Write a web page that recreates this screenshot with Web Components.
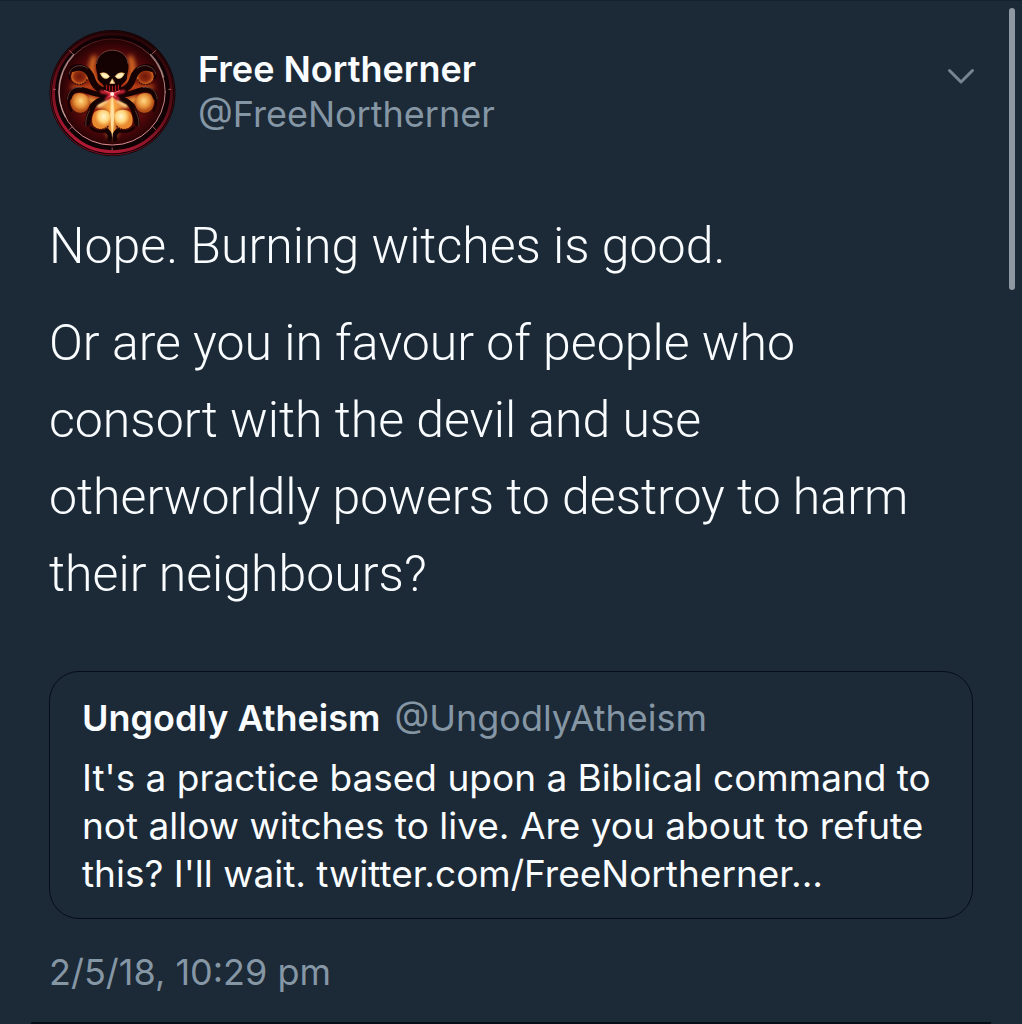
<!DOCTYPE html>
<html lang="en">
<head>
<meta charset="utf-8">
<meta name="viewport" content="width=device-width, initial-scale=1">
<title>Free Northerner</title>
<style>
  body {
    margin: 0;
    min-height: 100vh;
    background: #1c2936;
    color: #fafdff;
    font-family: Inter, "Liberation Sans", sans-serif;
    --muted: #8596a5;
    --line: #040d18;
  }
</style>
</head>
<body>
<tweet-detail>
  <tweet-author slot="author" name="Free Northerner" handle="@FreeNortherner">
    <hydra-avatar slot="avatar"></hydra-avatar>
  </tweet-author>
  <tweet-text>
    <p>Nope. Burning witches is good.</p>
    <p>Or are you in favour of people who<br>consort with the devil and use<br>otherworldly powers to destroy to harm<br>their neighbours?</p>
  </tweet-text>
  <quoted-tweet name="Ungodly Atheism" handle="@UngodlyAtheism">It's a practice based upon a Biblical command to<br>not allow witches to live. Are you about to refute<br>this? I'll wait. twitter.com/FreeNortherner...</quoted-tweet>
  <time slot="date" datetime="2018-02-05T22:29">2/5/18, 10:29 pm</time>
</tweet-detail>
<scroll-thumb></scroll-thumb>

<script>
/**
 * Page shell: stacks the author row, the body and the date above a divider.
 */
class TweetDetail extends HTMLElement {
  constructor () {
    super()
    this.attachShadow({ mode: 'open' })
  }

  connectedCallback () {
    this.shadowRoot.innerHTML = `
      <style>
        :host {
          display: block;
          padding: 29px 31px 0;
          border-top: 1px solid #15222e;
        }
        article {
          padding: 0 18px 26px;
        }
        .date {
          margin-top: 29px;
          font-size: 36px;
          line-height: 48px;
          color: var(--muted);
        }
        hr {
          margin: 0;
          border: 0;
          height: 2px;
          background: var(--line);
        }
      </style>
      <article>
        <slot name="author"></slot>
        <slot></slot>
        <div class="date"><slot name="date"></slot></div>
      </article>
      <hr>
    `
  }
}

/**
 * Avatar, display name and handle, with the menu button at the end.
 */
class TweetAuthor extends HTMLElement {
  constructor () {
    super()
    this.attachShadow({ mode: 'open' })
  }

  connectedCallback () {
    this.shadowRoot.innerHTML = `
      <style>
        :host {
          display: flex;
          align-items: center;
          gap: 22px;
        }
        .names {
          flex: 1;
          min-width: 0;
          padding-bottom: 2px;
          font-size: 36px;
          line-height: 45px;
        }
        .name {
          font-weight: 600;
        }
        .handle {
          color: var(--muted);
        }
        button {
          align-self: flex-start;
          display: flex;
          margin: 0;
          padding: 36px 0 16px 16px;
          border: 0;
          background: none;
          color: #758592;
          cursor: pointer;
        }
        svg {
          overflow: visible;
        }
      </style>
      <slot name="avatar"></slot>
      <div class="names">
        <div class="name"></div>
        <div class="handle"></div>
      </div>
      <button type="button" aria-label="More options">
        <svg width="24" height="20" viewBox="0 0 24 20" fill="none" stroke="currentColor" stroke-width="3" stroke-linecap="round" stroke-linejoin="round">
          <path d="M0.5 4.5 12 16 23.5 4.5"/>
        </svg>
      </button>
    `
    this.shadowRoot.querySelector('.name').textContent = this.getAttribute('name')
    this.shadowRoot.querySelector('.handle').textContent = this.getAttribute('handle')
  }
}

/**
 * Round emblem: a skull over six curled tentacles, lit from behind.
 */
class HydraAvatar extends HTMLElement {
  constructor () {
    super()
    this.attachShadow({ mode: 'open' })
  }

  connectedCallback () {
    this.shadowRoot.innerHTML = `
      <style>
        :host {
          display: block;
          flex: none;
          width: 127px;
          height: 126px;
        }
        svg {
          display: block;
          width: 100%;
          height: 100%;
        }
      </style>
      <svg viewBox="18 18 380 380" fill="none" stroke-linecap="round" role="img" aria-label="Avatar">
        <defs>
          <radialGradient id="disc" gradientUnits="userSpaceOnUse" cx="207" cy="208" r="160">
            <stop offset="0" stop-color="#d8451a"/>
            <stop offset=".45" stop-color="#86180b"/>
            <stop offset=".8" stop-color="#480609"/>
            <stop offset="1" stop-color="#250305"/>
          </radialGradient>
          <linearGradient id="rim" x1=".7" y1="0" x2=".35" y2="1">
            <stop offset="0" stop-color="#250507"/>
            <stop offset=".5" stop-color="#5d0d17"/>
            <stop offset="1" stop-color="#b51a36"/>
          </linearGradient>
          <linearGradient id="ring" x1="0" y1="0" x2="0" y2="1">
            <stop offset="0" stop-color="#4a1310"/>
            <stop offset=".3" stop-color="#a87573"/>
            <stop offset=".7" stop-color="#c98a8c"/>
            <stop offset="1" stop-color="#e08b8f"/>
          </linearGradient>
          <radialGradient id="lobe" cx=".55" cy=".4">
            <stop offset="0" stop-color="#ffd985"/>
            <stop offset=".6" stop-color="#e8953c"/>
            <stop offset="1" stop-color="#b65218"/>
          </radialGradient>
          <radialGradient id="ember">
            <stop offset="0" stop-color="#6d1809"/>
            <stop offset=".6" stop-color="#8f2a0e"/>
            <stop offset="1" stop-color="#d96f26"/>
          </radialGradient>
          <radialGradient id="hot" cx=".65" cy=".35">
            <stop offset="0" stop-color="#fff6cf"/>
            <stop offset=".55" stop-color="#ffd67c"/>
            <stop offset="1" stop-color="#e8892f"/>
          </radialGradient>
          <filter id="glow" x="-50%" y="-50%" width="200%" height="200%">
            <feGaussianBlur stdDeviation="8"/>
          </filter>
          <filter id="soft" x="-50%" y="-50%" width="200%" height="200%">
            <feGaussianBlur stdDeviation="3"/>
          </filter>
          <g id="side">
            <ellipse cx="109" cy="158" rx="26" ry="24" fill="url(#ember)"/>
            <path d="M86 214C100 204 124 206 134 220C142 236 140 252 127 262C114 272 94 268 87 255C80 243 78 226 86 214Z" fill="url(#lobe)"/>
            <path d="M152 268C160 256 190 254 199 268C203 284 200 300 190 311C180 320 162 318 152 308C144 298 145 280 152 268Z" fill="url(#hot)"/>
            <g stroke="#160203">
              <path d="M200 203C168 203 153 188 145 163C137 138 114 124 90 134" stroke-width="20"/>
              <path d="M94 129C80 134 73 148 79 164" stroke-width="6"/>
              <path d="M200 209C172 216 155 211 128 201C103 193 84 199 77 222" stroke-width="16"/>
              <path d="M77 216C73 232 76 250 84 262" stroke-width="6"/>
              <path d="M198 215C182 228 160 230 149 247C138 264 136 282 132 300" stroke-width="18"/>
              <path d="M190 322C199 328 203 336 199 348" stroke-width="14"/>
              <path d="M142 312C156 326 178 328 193 319" stroke-width="8"/>
            </g>
            <g stroke="#43100a" stroke-width="5" stroke-dasharray="1 7">
              <path d="M88 176C105 188 126 183 132 165"/>
              <path d="M88 262C105 278 130 270 140 252"/>
              <path d="M149 310C162 323 186 321 198 304"/>
            </g>
            <g stroke="#a87869" stroke-width="2" opacity=".7">
              <path d="M77 151C79 127 114 117 132 133"/>
              <path d="M72 226C74 200 92 188 115 191"/>
              <path d="M138 262C129 278 126 294 128 307"/>
            </g>
          </g>
        </defs>

        <circle cx="208" cy="208" r="190" fill="#100204"/>
        <circle cx="208" cy="207" r="178" stroke="url(#rim)" stroke-width="9"/>
        <circle cx="208" cy="208" r="187" stroke="url(#rim)" stroke-width="2"/>
        <circle cx="207" cy="205" r="160" fill="url(#disc)" stroke="url(#ring)" stroke-width="3"/>

        <g filter="url(#glow)">
          <path d="M158 176Q136 140 152 102M256 176Q278 140 262 102" stroke="#f8852a" stroke-width="14"/>
          <path d="M88 190H150M265 190H327" stroke="#d85a1c" stroke-width="12"/>
          <path d="M207 205V330" stroke="#ffa63c" stroke-width="28"/>
          <path d="M136 226 190 250M278 226 224 250" stroke="#ffb74a" stroke-width="16"/>
        </g>

        <use href="#side"/>
        <use href="#side" transform="matrix(-1 0 0 1 415 0)"/>

        <path d="M207 216 201 275 207 346 214 275Z" fill="#ffdf9f"/>
        <path d="M207 213V270M194 232 166 248M221 232 249 248" stroke="#ffe1a0" stroke-width="7" filter="url(#soft)"/>

        <path d="M207 78C177 78 158 98 158 126C158 141 164 151 163 163C164 174 177 178 181 186L184 202Q207 214 231 202L234 186C240 177 251 173 252 162C251 150 257 141 256 125C255 98 237 78 207 78Z" fill="#140102"/>
        <path d="M160 119C163 66 251 64 255 119" stroke="#714039" stroke-width="3"/>
        <g fill="#fff0bd" stroke="#ffbe62" stroke-width="2">
          <path d="M172 149C182 144 193 149 199 158C192 168 176 166 172 149Z"/>
          <path d="M243 149C233 144 222 149 216 158C223 168 239 166 243 149Z"/>
          <path d="M207 166 200 179H214Z"/>
        </g>
        <path d="M190 184V196M199 187V200M208 188V201M217 187V200M226 184V196" stroke="#a61a1b" stroke-width="4"/>
        <path d="M174 204 207 211 242 203M190 226 207 211 225 226" stroke="#ff2b43" stroke-width="8" filter="url(#soft)"/>
        <path d="M184 201 207 210 230 201M198 219 207 210 217 219" stroke="#ff6972" stroke-width="3"/>
        <circle cx="207" cy="211" r="6" fill="#fff0df"/>
        <path d="M78 80 88 90M328 90 338 80M78 318 88 308M328 308 338 318M30 197H36M378 197H384M207 374V380" stroke="#a25b59" stroke-width="3"/>
        <path d="M91 92A160 160 0 0 0 66 280M323 92A160 160 0 0 1 362 160" stroke="#e4c0bc" stroke-width="4" opacity=".6"/>
      </svg>
    `
  }
}

/**
 * Large body text of the tweet; paragraphs are slotted in.
 */
class TweetText extends HTMLElement {
  constructor () {
    super()
    this.attachShadow({ mode: 'open' })
  }

  connectedCallback () {
    this.shadowRoot.innerHTML = `
      <style>
        :host {
          display: flex;
          flex-direction: column;
          gap: 20px;
          margin: 52px 0 58px;
          font-family: Roboto, Inter, sans-serif;
          font-size: 50px;
          font-weight: 300;
          line-height: 77px;
        }
        ::slotted(p) {
          margin: 0;
        }
      </style>
      <slot></slot>
    `
  }
}

/**
 * Outlined card holding the quoted tweet.
 */
class QuotedTweet extends HTMLElement {
  constructor () {
    super()
    this.attachShadow({ mode: 'open' })
  }

  connectedCallback () {
    this.shadowRoot.innerHTML = `
      <style>
        :host {
          display: block;
          padding: 22px 24px 20px 32px;
          border: 1px solid var(--line);
          border-radius: 30px;
          font-size: 37px;
          line-height: 48px;
        }
        header {
          display: flex;
          flex-wrap: wrap;
          column-gap: 14px;
          margin-bottom: 12px;
          font-size: 36px;
        }
        .name {
          font-weight: 600;
        }
        .handle {
          color: var(--muted);
        }
      </style>
      <header>
        <span class="name"></span>
        <span class="handle"></span>
      </header>
      <slot></slot>
    `
    this.shadowRoot.querySelector('.name').textContent = this.getAttribute('name')
    this.shadowRoot.querySelector('.handle').textContent = this.getAttribute('handle')
  }
}

/**
 * Scroll indicator floating over the right edge of the page.
 */
class ScrollThumb extends HTMLElement {
  constructor () {
    super()
    this.attachShadow({ mode: 'open' })
  }

  connectedCallback () {
    this.shadowRoot.innerHTML = `
      <style>
        :host {
          position: absolute;
          top: 8px;
          right: 7px;
          width: 6px;
          height: 282px;
          border-radius: 3px;
          background: #8e98a3;
        }
      </style>
    `
  }
}

customElements.define('tweet-detail', TweetDetail)
customElements.define('tweet-author', TweetAuthor)
customElements.define('hydra-avatar', HydraAvatar)
customElements.define('tweet-text', TweetText)
customElements.define('quoted-tweet', QuotedTweet)
customElements.define('scroll-thumb', ScrollThumb)
</script>
</body>
</html>
